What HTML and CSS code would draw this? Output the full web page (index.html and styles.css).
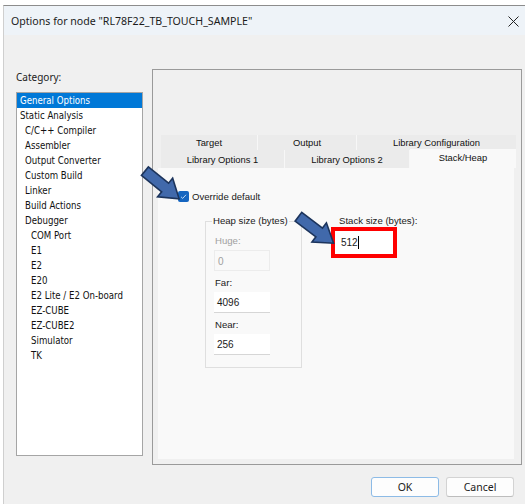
FILE: index.html
```html
<!DOCTYPE html>
<html lang="en">
<head>
    <meta charset="UTF-8">
    <title>Options for node</title>
    <link rel="stylesheet" href="styles.css">
</head>
<body>
    <div class="window">
        <div class="titlebar">
            <span class="title">Options for node "RL78F22_TB_TOUCH_SAMPLE"</span>
            <svg class="close" width="11" height="11" viewBox="0 0 11 11">
                <path d="M0.5 0.5L10.5 10.5M10.5 0.5L0.5 10.5" stroke="#222" stroke-width="1" fill="none"/>
            </svg>
        </div>

        <div class="client">
            <div class="main">
                <div class="category">
                    <div class="cat-label">Category:</div>
                    <ul class="cat-list">
                        <li class="selected">General Options</li>
                        <li>Static Analysis</li>
                        <li class="lvl1">C/C++ Compiler</li>
                        <li class="lvl1">Assembler</li>
                        <li class="lvl1">Output Converter</li>
                        <li class="lvl1">Custom Build</li>
                        <li class="lvl1">Linker</li>
                        <li class="lvl1">Build Actions</li>
                        <li class="lvl1">Debugger</li>
                        <li class="lvl2">COM Port</li>
                        <li class="lvl2">E1</li>
                        <li class="lvl2">E2</li>
                        <li class="lvl2">E20</li>
                        <li class="lvl2">E2 Lite / E2 On-board</li>
                        <li class="lvl2">EZ-CUBE</li>
                        <li class="lvl2">EZ-CUBE2</li>
                        <li class="lvl2">Simulator</li>
                        <li class="lvl2">TK</li>
                    </ul>
                </div>

                <div class="panel">
                    <div class="tabs">
                        <div class="tab-row">
                            <div class="tab" style="width: 97px">Target</div>
                            <div class="tab" style="width: 99px">Output</div>
                            <div class="tab" style="width: 159px">Library Configuration</div>
                        </div>
                        <div class="tab-row row2">
                            <div class="tab" style="width: 124px">Library Options 1</div>
                            <div class="tab" style="width: 125px">Library Options 2</div>
                            <div class="tab active" style="width: 106px">Stack/Heap</div>
                        </div>
                    </div>

                    <div class="page">
                        <label class="override">
                            <span class="checkbox">
                                <svg width="11" height="11" viewBox="0 0 11 11">
                                    <path d="M3 5.8L4.7 7.4L8 3.8" stroke="#cfe3f7" stroke-width="0.9" fill="none"/>
                                </svg>
                            </span>
                            Override default
                        </label>

                        <div class="groups">
                            <fieldset class="heap">
                                <legend>Heap size (bytes)</legend>
                                <div class="field-label disabled">Huge:</div>
                                <div class="field disabled">0</div>
                                <div class="field-label">Far:</div>
                                <div class="field">4096</div>
                                <div class="field-label">Near:</div>
                                <div class="field">256</div>
                            </fieldset>

                            <div class="stack">
                                <div class="stack-label">Stack size (bytes):</div>
                                <div class="highlight">
                                    <div class="field stack-field">512<span class="caret"></span></div>
                                </div>
                            </div>
                        </div>
                    </div>
                </div>
            </div>

            <div class="footer">
                <button class="btn btn-default">OK</button>
                <button class="btn">Cancel</button>
            </div>
        </div>
    </div>

    <!-- callout arrows drawn over the dialog -->
    <svg class="arrow arrow-override" width="46" height="28" viewBox="0 0 46 28">
        <polygon points="1,8.5 27,8.5 27,2 45,14 27,26 27,19.5 1,19.5" />
    </svg>
    <svg class="arrow arrow-stack" width="46" height="28" viewBox="0 0 46 28">
        <polygon points="1,8.5 27,8.5 27,2 45,14 27,26 27,19.5 1,19.5" />
    </svg>
</body>
</html>
```

FILE: styles.css
```css
* {
    margin: 0;
    padding: 0;
    box-sizing: border-box;
}

body {
    position: relative;
    width: 525px;
    height: 504px;
    overflow: hidden;
    background: #ffffff;
    font-family: "Liberation Sans", Arial, sans-serif;
    color: #1a1a1a;
}

.window {
    margin: 5px 0 0 3px;
    height: 499px;
    border-top: 1px solid #8c8c8c;
    border-left: 1px solid #cfcfcf;
    display: flex;
    flex-direction: column;
}

.titlebar {
    height: 29px;
    flex-shrink: 0;
    display: flex;
    align-items: center;
    justify-content: space-between;
    padding: 0 6px 0 7px;
    background: #eef3f8;
}

.title {
    font-family: "Noto Sans", sans-serif;
    font-size: 10.6px;
    color: #1b1b1b;
    margin-top: 1px;
}

.close {
    margin-top: 1px;
}

.client {
    flex: 1;
    background: #f0f0f0;
}

.main {
    display: flex;
    align-items: flex-start;
}

/* category tree */
.category {
    margin-left: 12px;
    width: 127px;
}

.cat-label {
    margin-top: 36px;
    height: 13px;
    line-height: 13px;
    font-family: "Noto Sans", sans-serif;
    font-size: 10px;
    color: #222;
}

.cat-list {
    list-style: none;
    margin-top: 8px;
    height: 364px;
    background: #ffffff;
    border: 1px solid #a5a5a5;
    font-family: "DejaVu Sans Condensed", "DejaVu Sans", sans-serif;
    font-size: 9.6px;
    color: #111;
}

.cat-list li {
    height: 15px;
    line-height: 15px;
    padding-left: 3px;
    white-space: nowrap;
}

.cat-list li.lvl1 {
    padding-left: 8px;
}

.cat-list li.lvl2 {
    padding-left: 14px;
}

.cat-list li.selected {
    background: #0078d7;
    color: #ffffff;
}

/* option panel */
.panel {
    margin: 34px 0 0 9px;
    width: 370px;
    height: 396px;
    border: 1px solid #9a9a9a;
    background: #f0f0f0;
}

.tabs {
    margin: 65px 0 0 8px;
    width: 355px;
    font-size: 9.4px;
    color: #111;
}

.tab-row {
    display: flex;
    height: 15px;
}

.tab-row.row2 {
    height: 18px;
}

.tab {
    background: #ebebeb;
    border-right: 1px solid #f7f7f7;
    text-align: center;
    line-height: 15px;
}

.row2 .tab {
    line-height: 20px;
}

.tab:last-child {
    border-right: none;
}

.tab.active {
    background: #f9f9f9;
    margin-top: -1px;
    line-height: 18px;
}

.page {
    margin-left: 5px;
    width: 356px;
    height: 291px;
    background: #f9f9f9;
    padding: 23px 0 0 20px;
    font-size: 9.6px;
    color: #1a1a1a;
}

.override {
    display: flex;
    align-items: center;
    gap: 3px;
    height: 11px;
}

.checkbox {
    width: 11px;
    height: 11px;
    border-radius: 2px;
    background: #1565c0;
    display: block;
}

.checkbox svg {
    display: block;
}

.groups {
    display: flex;
    align-items: flex-start;
    margin-top: 12px;
    margin-left: 27px;
}

.heap {
    width: 97px;
    border: 1px solid #dfdfdf;
    padding: 0 8px 12px 8px;
    min-width: 0;
}

.heap legend {
    padding: 0 1px;
    margin-left: -2px;
    line-height: 14px;
}

.field-label {
    height: 13px;
    line-height: 13px;
    margin-top: 5px;
    padding-left: 1px;
}

.heap legend + .field-label {
    margin-top: 6px;
}

.field-label.disabled {
    color: #a0a0a0;
}

.field {
    margin-top: 3px;
    width: 56px;
    height: 21px;
    line-height: 21px;
    padding-left: 3px;
    background: #ffffff;
    border-bottom: 1px solid #d6d6d6;
    font-size: 10px;
}

.field.disabled {
    background: #f9f9f9;
    border: 1px solid #ececec;
    color: #a0a0a0;
}

.stack {
    margin-left: 29px;
}

.stack-label {
    height: 13px;
    line-height: 13px;
    padding-left: 8px;
}

.highlight {
    width: 66px;
    height: 31px;
    border: 4px solid #ff0000;
}

.stack-field {
    margin: 0;
    width: 58px;
    height: 23px;
    line-height: 23px;
    padding-left: 6px;
    border: none;
    display: flex;
    align-items: center;
}

.caret {
    display: inline-block;
    width: 1px;
    height: 13px;
    background: #000;
}

/* dialog buttons */
.footer {
    display: flex;
    justify-content: flex-end;
    gap: 7px;
    margin-top: 12px;
    padding-right: 11px;
}

.btn {
    width: 68px;
    height: 20px;
    border: 1px solid #d3d3d3;
    border-bottom-color: #bdbdbd;
    border-radius: 3px;
    background: #fdfdfd;
    font-family: "Noto Sans", sans-serif;
    font-size: 10.5px;
    color: #1b1b1b;
}

.btn-default {
    border-color: #8dbbe6;
}

/* blue callout arrows */
.arrow {
    position: absolute;
    overflow: visible;
}

.arrow polygon {
    fill: #4169ab;
    stroke: #1c345c;
    stroke-width: 1.6;
    stroke-linejoin: miter;
}

.arrow-override {
    left: 139px;
    top: 171px;
    transform: rotate(39deg);
}

.arrow-stack {
    left: 293px;
    top: 216px;
    transform: rotate(37deg);
}
```
